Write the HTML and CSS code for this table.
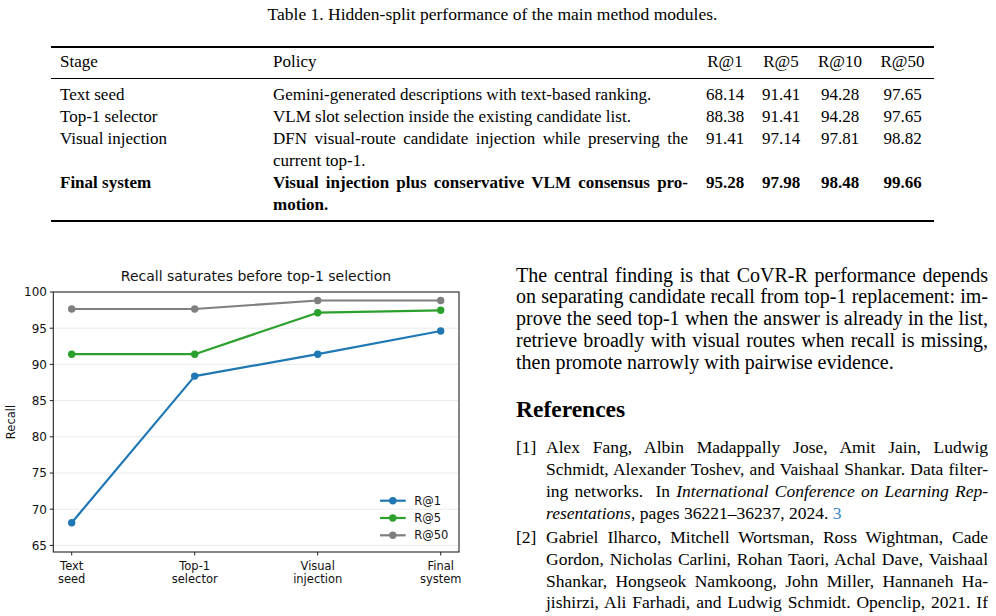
FILE: index.html
```html
<!DOCTYPE html>
<html lang="en">
<head>
    <meta charset="UTF-8">
    <title>Hidden-split performance</title>
    <link rel="stylesheet" href="styles.css">
</head>
<body>
<div class="page">
    <div class="tbl-block">
        <div class="caption">Table 1. Hidden-split performance of the main method modules.</div>
        <table class="results">
            <colgroup>
                <col class="c-stage"><col class="c-policy"><col class="c-r1"><col class="c-r5"><col class="c-r10"><col class="c-r50">
            </colgroup>
            <thead>
                <tr><th>Stage</th><th>Policy</th><th class="num">R@1</th><th class="num">R@5</th><th class="num">R@10</th><th class="num">R@50</th></tr>
            </thead>
            <tbody>
                <tr class="first"><td>Text seed</td><td>Gemini-generated descriptions with text-based ranking.</td><td class="num">68.14</td><td class="num">91.41</td><td class="num">94.28</td><td class="num">97.65</td></tr>
                <tr><td>Top-1 selector</td><td>VLM slot selection inside the existing candidate list.</td><td class="num">88.38</td><td class="num">91.41</td><td class="num">94.28</td><td class="num">97.65</td></tr>
                <tr><td>Visual injection</td><td><span class="jl">DFN visual-route candidate injection while preserving the</span><span class="ll">current top-1.</span></td><td class="num">91.41</td><td class="num">97.14</td><td class="num">97.81</td><td class="num">98.82</td></tr>
                <tr class="final last"><td>Final system</td><td><span class="jl">Visual injection plus conservative VLM consensus pro-</span><span class="ll">motion.</span></td><td class="num">95.28</td><td class="num">97.98</td><td class="num">98.48</td><td class="num">99.66</td></tr>
            </tbody>
        </table>
    </div>

    <div class="columns">
        <div class="col-left">
            <svg class="chart" width="471" height="342" viewBox="0 258 471 342">
                <!-- grid -->
                <g class="grid">
                    <line x1="53.3" x2="459" y1="328.2" y2="328.2"/>
                    <line x1="53.3" x2="459" y1="364.4" y2="364.4"/>
                    <line x1="53.3" x2="459" y1="400.6" y2="400.6"/>
                    <line x1="53.3" x2="459" y1="436.8" y2="436.8"/>
                    <line x1="53.3" x2="459" y1="473" y2="473"/>
                    <line x1="53.3" x2="459" y1="509.2" y2="509.2"/>
                    <line x1="53.3" x2="459" y1="545.4" y2="545.4"/>
                </g>
                <text class="c-title" x="256" y="281" text-anchor="middle">Recall saturates before top-1 selection</text>

                <!-- series -->
                <g class="series s-gray">
                    <polyline points="71.7,309 194.7,309 317.7,300.5 440.7,300.5"/>
                    <circle cx="71.7" cy="309" r="3.7"/><circle cx="194.7" cy="309" r="3.7"/><circle cx="317.7" cy="300.5" r="3.7"/><circle cx="440.7" cy="300.5" r="3.7"/>
                </g>
                <g class="series s-green">
                    <polyline points="71.7,354.2 194.7,354.2 317.7,312.7 440.7,310.3"/>
                    <circle cx="71.7" cy="354.2" r="3.7"/><circle cx="194.7" cy="354.2" r="3.7"/><circle cx="317.7" cy="312.7" r="3.7"/><circle cx="440.7" cy="310.3" r="3.7"/>
                </g>
                <g class="series s-blue">
                    <polyline points="71.7,522.7 194.7,376.1 317.7,354.2 440.7,331"/>
                    <circle cx="71.7" cy="522.7" r="3.7"/><circle cx="194.7" cy="376.1" r="3.7"/><circle cx="317.7" cy="354.2" r="3.7"/><circle cx="440.7" cy="331" r="3.7"/>
                </g>

                <rect class="frame" x="53.3" y="292" width="405.7" height="260"/>

                <!-- y axis -->
                <g class="ticks">
                    <line x1="49.8" x2="53.3" y1="292" y2="292"/>
                    <line x1="49.8" x2="53.3" y1="328.2" y2="328.2"/>
                    <line x1="49.8" x2="53.3" y1="364.4" y2="364.4"/>
                    <line x1="49.8" x2="53.3" y1="400.6" y2="400.6"/>
                    <line x1="49.8" x2="53.3" y1="436.8" y2="436.8"/>
                    <line x1="49.8" x2="53.3" y1="473" y2="473"/>
                    <line x1="49.8" x2="53.3" y1="509.2" y2="509.2"/>
                    <line x1="49.8" x2="53.3" y1="545.4" y2="545.4"/>
                    <line x1="71.7" x2="71.7" y1="552" y2="555.5"/>
                    <line x1="194.7" x2="194.7" y1="552" y2="555.5"/>
                    <line x1="317.7" x2="317.7" y1="552" y2="555.5"/>
                    <line x1="440.7" x2="440.7" y1="552" y2="555.5"/>
                </g>
                <g class="ylabels">
                    <text x="47" y="296.3">100</text>
                    <text x="47" y="332.5">95</text>
                    <text x="47" y="368.7">90</text>
                    <text x="47" y="404.9">85</text>
                    <text x="47" y="441.1">80</text>
                    <text x="47" y="477.3">75</text>
                    <text x="47" y="513.5">70</text>
                    <text x="47" y="549.7">65</text>
                </g>
                <text class="axis-label" transform="rotate(-90 15 422)" x="15" y="422" text-anchor="middle">Recall</text>

                <!-- x axis -->
                <g class="xlabels">
                    <text x="71.7" y="570"><tspan x="71.7">Text</tspan><tspan x="71.7" dy="12.7">seed</tspan></text>
                    <text x="194.7" y="570"><tspan x="194.7">Top-1</tspan><tspan x="194.7" dy="12.7">selector</tspan></text>
                    <text x="317.7" y="570"><tspan x="317.7">Visual</tspan><tspan x="317.7" dy="12.7">injection</tspan></text>
                    <text x="440.7" y="570"><tspan x="440.7">Final</tspan><tspan x="440.7" dy="12.7">system</tspan></text>
                </g>

                <!-- legend -->
                <g class="legend">
                    <g class="series s-blue"><line x1="380" x2="405.7" y1="500.7" y2="500.7"/><circle cx="392.8" cy="500.7" r="3.7"/></g>
                    <text x="414.3" y="504.8">R@1</text>
                    <g class="series s-green"><line x1="380" x2="405.7" y1="518" y2="518"/><circle cx="392.8" cy="518" r="3.7"/></g>
                    <text x="414.3" y="522.1">R@5</text>
                    <g class="series s-gray"><line x1="380" x2="405.7" y1="535.3" y2="535.3"/><circle cx="392.8" cy="535.3" r="3.7"/></g>
                    <text x="414.3" y="539.4">R@50</text>
                </g>
            </svg>
        </div>

        <div class="col-right">
            <p class="body-text">
                <span class="jl">The central finding is that CoVR-R performance depends</span>
                <span class="jl">on separating candidate recall from top-1 replacement: im-</span>
                <span class="jl">prove the seed top-1 when the answer is already in the list,</span>
                <span class="jl">retrieve broadly with visual routes when recall is missing,</span>
                <span class="ll">then promote narrowly with pairwise evidence.</span>
            </p>

            <h2 class="section">References</h2>

            <div class="refs">
                <div class="ref">
                    <span class="ref-num">[1]</span>
                    <div class="ref-text">
                        <span class="jl">Alex Fang, Albin Madappally Jose, Amit Jain, Ludwig</span>
                        <span class="jl">Schmidt, Alexander Toshev, and Vaishaal Shankar. Data filter-</span>
                        <span class="jl">ing networks. &nbsp;In <i>International Conference on Learning Rep-</i></span>
                        <span class="ll"><i>resentations</i>, pages 36221–36237, 2024. <a class="cite">3</a></span>
                    </div>
                </div>
                <div class="ref">
                    <span class="ref-num">[2]</span>
                    <div class="ref-text">
                        <span class="jl">Gabriel Ilharco, Mitchell Wortsman, Ross Wightman, Cade</span>
                        <span class="jl">Gordon, Nicholas Carlini, Rohan Taori, Achal Dave, Vaishaal</span>
                        <span class="jl">Shankar, Hongseok Namkoong, John Miller, Hannaneh Ha-</span>
                        <span class="jl">jishirzi, Ali Farhadi, and Ludwig Schmidt. Openclip, 2021. If</span>
                    </div>
                </div>
            </div>
        </div>
    </div>
</div>
</body>
</html>
```

FILE: styles.css
```css
body {
    margin: 0;
    background: #fff;
    color: #000;
    font-family: "Liberation Serif", "Times New Roman", serif;
}
.page {
    width: 988px;
    height: 616px;
    overflow: hidden;
}

/* justified lines, one per span */
.jl {
    display: block;
    text-align: justify;
    text-align-last: justify;
    word-spacing: -2px;
}
.ll {
    display: block;
    text-align: left;
}

/* table */
.tbl-block {
    width: 883px;
    margin-left: 51px;
    padding-top: 3px;
}
.caption {
    font-size: 17.5px;
    line-height: 22px;
    text-align: center;
}
.results {
    width: 883px;
    margin-top: 21px;
    border-collapse: collapse;
    table-layout: fixed;
    font-size: 17px;
    line-height: 22px;
    border-top: 2px solid #000;
    border-bottom: 2px solid #000;
}
.c-stage { width: 213px; }
.c-policy { width: 433px; }
.c-r1, .c-r5 { width: 56px; }
.c-r10 { width: 62px; }
.c-r50 { width: 63px; }
.results th,
.results td {
    padding: 0 9px;
    text-align: left;
    vertical-align: top;
    font-weight: normal;
    white-space: nowrap;
}
.results td:nth-child(2) {
    white-space: normal;
}
.results th {
    padding-top: 3px;
    padding-bottom: 5px;
    border-bottom: 1px solid #000;
}
.results th.num,
.results td.num {
    text-align: center;
    padding: 0;
}
.results th.num {
    padding-top: 3px;
    padding-bottom: 5px;
}
.results tr.first td { padding-top: 5px; }
.results tr.last td { padding-bottom: 4px; }
.results tr.final td { font-weight: bold; }

/* lower part */
.columns {
    display: grid;
    grid-template-columns: 471px 472px;
    column-gap: 45px;
    margin-top: 36px;
}
.chart {
    display: block;
}
.chart text {
    font-family: "DejaVu Sans", sans-serif;
    fill: #111;
}
.c-title { font-size: 14px; }
.ylabels text {
    font-size: 12px;
    text-anchor: end;
}
.xlabels text {
    font-size: 11.5px;
    text-anchor: middle;
}
.axis-label { font-size: 11.5px; }
.legend text { font-size: 11.5px; }
.grid line {
    stroke: #ebebeb;
    stroke-width: 1;
}
.frame {
    fill: none;
    stroke: #222;
    stroke-width: 1.1;
}
.ticks line {
    stroke: #222;
    stroke-width: 1;
}
.series polyline,
.series line {
    fill: none;
    stroke-width: 2.2;
    stroke-linejoin: round;
}
.s-blue polyline, .s-blue line { stroke: #1f77b4; }
.s-blue circle { fill: #1f77b4; }
.s-green polyline, .s-green line { stroke: #2ca02c; }
.s-green circle { fill: #2ca02c; }
.s-gray polyline, .s-gray line { stroke: #7f7f7f; }
.s-gray circle { fill: #7f7f7f; }

.col-right {
    padding-top: 6.5px;
}
.body-text {
    margin: 0;
    font-size: 20px;
    line-height: 21.8px;
}
.section {
    margin: 23px 0 0;
    font-size: 23.5px;
    line-height: 26px;
    font-weight: bold;
}
.refs {
    margin-top: 15px;
    font-size: 17.5px;
    line-height: 21.7px;
}
.ref {
    display: flex;
}
.ref + .ref {
    margin-top: 3px;
}
.ref-num {
    width: 30px;
    flex: none;
}
.ref-text {
    flex: 1;
}
.cite {
    color: #3b82c4;
}
```
